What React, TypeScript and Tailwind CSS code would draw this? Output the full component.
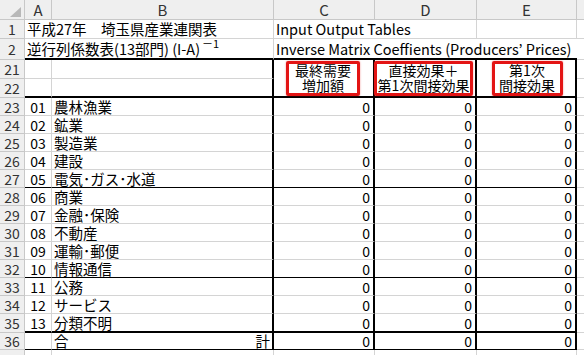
import React from 'react'

const jp = "font-['Noto_Sans_CJK_JP','Noto_Sans',sans-serif]"

const sectors: [string, string, string][] = [
  ['23', '01', '農林漁業'],
  ['24', '02', '鉱業'],
  ['25', '03', '製造業'],
  ['26', '04', '建設'],
  ['27', '05', '電気･ガス･水道'],
  ['28', '06', '商業'],
  ['29', '07', '金融･保険'],
  ['30', '08', '不動産'],
  ['31', '09', '運輸･郵便'],
  ['32', '10', '情報通信'],
  ['33', '11', '公務'],
  ['34', '12', 'サービス'],
  ['35', '13', '分類不明'],
]

// bottom edge of each data row
const rowEdge = (n: string) => {
  if (n === '35') return 'border-b-2 border-b-black'
  if (n === '27' || n === '32') return 'border-b border-b-black'
  return 'border-b border-b-[#d4d4d4]'
}

const RowHead = ({ n }: { n: string }) => (
  <div className="flex items-center justify-center border-r border-b border-[#c8c8c8] bg-[#efefef] text-[14px] leading-[16px] text-[#333]">
    {n}
  </div>
)

const ColHead = ({ label }: { label: string }) => (
  <div className="flex items-center justify-center border-r border-b border-[#c8c8c8] bg-[#efefef] text-[15px] leading-[16px] text-[#333]">
    {label}
  </div>
)

const RedBox = ({ top, bottom, className }: { top: string; bottom: string; className: string }) => (
  <div
    className={`flex flex-col items-center justify-center whitespace-nowrap rounded-[2px] border-[3px] border-[#e31414] shadow-[0_0_2px_rgba(220,0,0,0.45)] text-[14px] leading-[15px] ${className}`}
  >
    <div>{top}</div>
    <div>{bottom}</div>
  </div>
)

const numCell = 'flex items-center justify-end border-r-2 border-r-black pr-[3px] text-[14px] leading-[16px]'

export default function App() {
  return (
    <div className={`w-[584px] h-[355px] overflow-hidden bg-white text-black ${jp}`}>
      <div className="grid grid-cols-[25px_27px_222px_101px_102px_100px_7px] grid-rows-[20px_19px_21px_19px_19px_repeat(12,18px)_19px_17px_5px]">
        {/* column headers */}
        <div className="flex items-end justify-end border-r border-b border-[#c8c8c8] bg-[#efefef] pr-[3px] pb-[2px]">
          <svg width="11" height="10" viewBox="0 0 11 10">
            <polygon points="11,0 11,10 0,10" fill="#b8b8b8" />
          </svg>
        </div>
        <ColHead label="A" />
        <ColHead label="B" />
        <ColHead label="C" />
        <ColHead label="D" />
        <ColHead label="E" />
        <div className="border-b border-[#c8c8c8] bg-[#efefef]" />

        {/* row 1 */}
        <RowHead n="1" />
        <div className="col-span-2 flex items-center border-r border-b border-[#d4d4d4] pl-[2px] text-[14.5px] leading-[16px] whitespace-nowrap">
          平成27年　埼玉県産業連関表
        </div>
        <div className="col-span-2 flex items-center border-r border-b border-[#d4d4d4] pl-[2px] text-[14.5px] leading-[16px] whitespace-nowrap">
          Input Output Tables
        </div>
        <div className="border-r border-b border-[#d4d4d4]" />
        <div className="border-b border-[#d4d4d4]" />

        {/* row 2 */}
        <RowHead n="2" />
        <div className="col-span-2 flex items-center border-r border-r-[#d4d4d4] border-b-2 border-b-black pl-[2px] text-[14.5px] leading-[16px] whitespace-nowrap">
          <span>逆行列係数表(13部門) (I-A)</span>
          <span className="ml-[2px] inline-block -translate-y-[5px] text-[11px] leading-[11px]">－1</span>
        </div>
        <div className="col-span-3 flex items-center border-b-2 border-b-black pl-[2px] text-[14.5px] leading-[16px] whitespace-nowrap">
          Inverse Matrix Coeffients (Producers’ Prices)
        </div>
        <div className="border-b border-[#d4d4d4]" />

        {/* rows 21-22 */}
        <RowHead n="21" />
        <div className="border-r border-b border-[#d4d4d4]" />
        <div className="border-r-2 border-r-black border-b border-b-[#d4d4d4]" />
        <div className="row-span-2 flex items-center justify-center border-r-2 border-b-2 border-black">
          <RedBox top="最終需要" bottom="増加額" className="h-[35px] w-[74px] -ml-[1px]" />
        </div>
        <div className="row-span-2 flex items-center justify-start border-r-2 border-b-2 border-black">
          <RedBox top="直接効果＋" bottom="第1次間接効果" className="h-[35px] w-[99px] -ml-[1px]" />
        </div>
        <div className="row-span-2 flex items-center justify-center border-r-2 border-b-2 border-black">
          <RedBox top="第1次" bottom="間接効果" className="h-[35px] w-[71px] ml-[2px]" />
        </div>
        <div className="border-b border-[#d4d4d4]" />
        <RowHead n="22" />
        <div className="border-r border-r-[#d4d4d4] border-b-2 border-b-black" />
        <div className="border-r-2 border-b-2 border-black" />
        <div className="border-b border-[#d4d4d4]" />

        {/* sector rows */}
        {sectors.map(([n, code, name]) => (
          <React.Fragment key={n}>
            <RowHead n={n} />
            <div className={`flex items-center justify-center border-r border-r-[#d4d4d4] text-[14px] leading-[16px] ${rowEdge(n)}`}>
              {code}
            </div>
            <div className={`flex items-center border-r-2 border-r-black pl-[2px] text-[14.5px] leading-[16px] ${rowEdge(n)}`}>
              {name}
            </div>
            <div className={`${numCell} ${rowEdge(n)}`}>0</div>
            <div className={`${numCell} ${rowEdge(n)}`}>0</div>
            <div className={`${numCell} ${rowEdge(n)}`}>0</div>
            <div className="border-b border-[#d4d4d4]" />
          </React.Fragment>
        ))}

        {/* total row */}
        <RowHead n="36" />
        <div className="border-r border-r-[#d4d4d4] border-b border-b-black" />
        <div className="flex items-center justify-between border-r-2 border-r-black border-b border-b-black pl-[2px] pr-[2px] text-[14.5px] leading-[16px]">
          <span>合</span>
          <span>計</span>
        </div>
        <div className={`${numCell} border-b border-b-black`}>0</div>
        <div className={`${numCell} border-b border-b-black`}>0</div>
        <div className={`${numCell} border-b border-b-black`}>0</div>
        <div className="border-b border-[#d4d4d4]" />

        {/* row 37 (cut off) */}
        <div className="border-r border-[#c8c8c8] bg-[#efefef]" />
        <div className="border-r border-[#d4d4d4]" />
        <div className="border-r border-[#d4d4d4]" />
        <div className="border-r border-[#d4d4d4]" />
        <div className="border-r border-[#d4d4d4]" />
        <div className="border-r border-[#d4d4d4]" />
        <div />
      </div>
    </div>
  )
}
